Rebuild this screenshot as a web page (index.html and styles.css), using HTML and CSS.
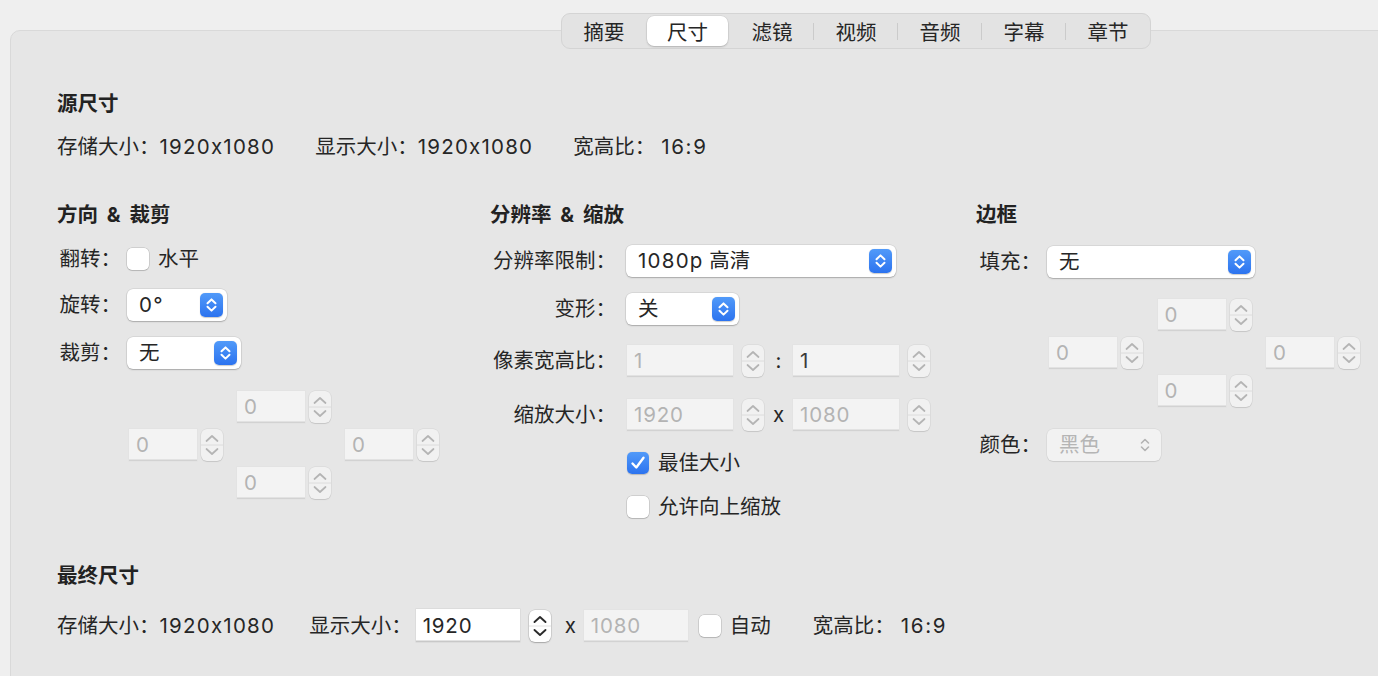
FILE: index.html
```html
<!DOCTYPE html>
<html lang="zh-CN">
<head>
<meta charset="utf-8">
<title>尺寸</title>
<link rel="stylesheet" href="styles.css">
</head>
<body>
<nav class="tabs">
  <div class="tab">摘要</div>
  <div class="tab active">尺寸</div>
  <div class="tab">滤镜</div>
  <div class="tab divided">视频</div>
  <div class="tab divided">音频</div>
  <div class="tab divided">字幕</div>
  <div class="tab divided">章节</div>
</nav>

<main class="panel">
  <h2 class="heading">源尺寸</h2>
  <div class="info-row">
    <span>存储大小：<span class="num">1920x1080</span></span>
    <span>显示大小：<span class="num">1920x1080</span></span>
    <span>宽高比：<span class="num ratio-num">16:9</span></span>
  </div>

  <div class="cols">
    <!-- Column 1 -->
    <section class="col">
      <h2 class="heading spaced">方向 &amp; 裁剪</h2>
      <div class="row r1-1">
        <span class="label lbl1">翻转：</span>
        <span class="check"></span>
        <span class="check-text">水平</span>
      </div>
      <div class="row r1-2">
        <span class="label lbl1">旋转：</span>
        <div class="popup w100"><span class="num">0°</span>
          <span class="arrows"><svg viewBox="0 0 23 24" width="23" height="24"><path d="M7.5 10.2 L11.5 6.4 L15.5 10.2 M7.5 13.8 L11.5 17.6 L15.5 13.8" fill="none" stroke="#fff" stroke-width="2" stroke-linecap="round" stroke-linejoin="round"/></svg></span>
        </div>
      </div>
      <div class="row r1-3">
        <span class="label lbl1">裁剪：</span>
        <div class="popup w114"><span>无</span>
          <span class="arrows"><svg viewBox="0 0 23 24" width="23" height="24"><path d="M7.5 10.2 L11.5 6.4 L15.5 10.2 M7.5 13.8 L11.5 17.6 L15.5 13.8" fill="none" stroke="#fff" stroke-width="2" stroke-linecap="round" stroke-linejoin="round"/></svg></span>
        </div>
      </div>
      <div class="quad quad1">
        <div class="spin q-top"><span class="field w68">0</span><span class="stepper"><svg viewBox="0 0 22 32" width="22" height="32"><line x1="0" y1="16" x2="22" y2="16" stroke="#dcdcdc" stroke-width="1"/><path d="M5.5 12 L11 7 L16.5 12 M5.5 20 L11 25 L16.5 20" fill="none" stroke="#b4b4b4" stroke-width="1.7" stroke-linecap="round" stroke-linejoin="round"/></svg></span></div>
        <div class="spin q-left"><span class="field w68">0</span><span class="stepper"><svg viewBox="0 0 22 32" width="22" height="32"><line x1="0" y1="16" x2="22" y2="16" stroke="#dcdcdc" stroke-width="1"/><path d="M5.5 12 L11 7 L16.5 12 M5.5 20 L11 25 L16.5 20" fill="none" stroke="#b4b4b4" stroke-width="1.7" stroke-linecap="round" stroke-linejoin="round"/></svg></span></div>
        <div class="spin q-right"><span class="field w68">0</span><span class="stepper"><svg viewBox="0 0 22 32" width="22" height="32"><line x1="0" y1="16" x2="22" y2="16" stroke="#dcdcdc" stroke-width="1"/><path d="M5.5 12 L11 7 L16.5 12 M5.5 20 L11 25 L16.5 20" fill="none" stroke="#b4b4b4" stroke-width="1.7" stroke-linecap="round" stroke-linejoin="round"/></svg></span></div>
        <div class="spin q-bottom"><span class="field w68">0</span><span class="stepper"><svg viewBox="0 0 22 32" width="22" height="32"><line x1="0" y1="16" x2="22" y2="16" stroke="#dcdcdc" stroke-width="1"/><path d="M5.5 12 L11 7 L16.5 12 M5.5 20 L11 25 L16.5 20" fill="none" stroke="#b4b4b4" stroke-width="1.7" stroke-linecap="round" stroke-linejoin="round"/></svg></span></div>
      </div>
    </section>

    <!-- Column 2 -->
    <section class="col">
      <h2 class="heading spaced">分辨率 &amp; 缩放</h2>
      <div class="row r2-1">
        <span class="label lbl2">分辨率限制：</span>
        <div class="popup w270"><span><span class="num">1080p</span> 高清</span>
          <span class="arrows"><svg viewBox="0 0 23 24" width="23" height="24"><path d="M7.5 10.2 L11.5 6.4 L15.5 10.2 M7.5 13.8 L11.5 17.6 L15.5 13.8" fill="none" stroke="#fff" stroke-width="2" stroke-linecap="round" stroke-linejoin="round"/></svg></span>
        </div>
      </div>
      <div class="row r2-2">
        <span class="label lbl2">变形：</span>
        <div class="popup w113"><span>关</span>
          <span class="arrows"><svg viewBox="0 0 23 24" width="23" height="24"><path d="M7.5 10.2 L11.5 6.4 L15.5 10.2 M7.5 13.8 L11.5 17.6 L15.5 13.8" fill="none" stroke="#fff" stroke-width="2" stroke-linecap="round" stroke-linejoin="round"/></svg></span>
        </div>
      </div>
      <div class="row r2-3">
        <span class="label lbl2">像素宽高比：</span>
        <span class="field w106 shift">1</span>
        <span class="stepper gap9"><svg viewBox="0 0 22 32" width="22" height="32"><line x1="0" y1="16" x2="22" y2="16" stroke="#dcdcdc" stroke-width="1"/><path d="M5.5 12 L11 7 L16.5 12 M5.5 20 L11 25 L16.5 20" fill="none" stroke="#b4b4b4" stroke-width="1.7" stroke-linecap="round" stroke-linejoin="round"/></svg></span>
        <span class="mid">:</span>
        <span class="field w106 darktext">1</span>
        <span class="stepper gap9"><svg viewBox="0 0 22 32" width="22" height="32"><line x1="0" y1="16" x2="22" y2="16" stroke="#dcdcdc" stroke-width="1"/><path d="M5.5 12 L11 7 L16.5 12 M5.5 20 L11 25 L16.5 20" fill="none" stroke="#b4b4b4" stroke-width="1.7" stroke-linecap="round" stroke-linejoin="round"/></svg></span>
      </div>
      <div class="row r2-4">
        <span class="label lbl2">缩放大小：</span>
        <span class="field w106 shift">1920</span>
        <span class="stepper gap9"><svg viewBox="0 0 22 32" width="22" height="32"><line x1="0" y1="16" x2="22" y2="16" stroke="#dcdcdc" stroke-width="1"/><path d="M5.5 12 L11 7 L16.5 12 M5.5 20 L11 25 L16.5 20" fill="none" stroke="#b4b4b4" stroke-width="1.7" stroke-linecap="round" stroke-linejoin="round"/></svg></span>
        <span class="mid">x</span>
        <span class="field w106">1080</span>
        <span class="stepper gap9"><svg viewBox="0 0 22 32" width="22" height="32"><line x1="0" y1="16" x2="22" y2="16" stroke="#dcdcdc" stroke-width="1"/><path d="M5.5 12 L11 7 L16.5 12 M5.5 20 L11 25 L16.5 20" fill="none" stroke="#b4b4b4" stroke-width="1.7" stroke-linecap="round" stroke-linejoin="round"/></svg></span>
      </div>
      <div class="row r2-5">
        <span class="label lbl2"></span>
        <span class="check on shift"><svg viewBox="0 0 22 22" width="22" height="22"><path d="M5.5 11.5 L9.3 15.5 L16.5 5.8" fill="none" stroke="#fff" stroke-width="2.4" stroke-linecap="round" stroke-linejoin="round"/></svg></span>
        <span class="check-text">最佳大小</span>
      </div>
      <div class="row r2-6">
        <span class="label lbl2"></span>
        <span class="check shift"></span>
        <span class="check-text">允许向上缩放</span>
      </div>
    </section>

    <!-- Column 3 -->
    <section class="col">
      <h2 class="heading">边框</h2>
      <div class="row r3-1">
        <span class="label lbl3">填充：</span>
        <div class="popup w208"><span>无</span>
          <span class="arrows"><svg viewBox="0 0 23 24" width="23" height="24"><path d="M7.5 10.2 L11.5 6.4 L15.5 10.2 M7.5 13.8 L11.5 17.6 L15.5 13.8" fill="none" stroke="#fff" stroke-width="2" stroke-linecap="round" stroke-linejoin="round"/></svg></span>
        </div>
      </div>
      <div class="quad quad3">
        <div class="spin q-top"><span class="field w68">0</span><span class="stepper"><svg viewBox="0 0 22 32" width="22" height="32"><line x1="0" y1="16" x2="22" y2="16" stroke="#dcdcdc" stroke-width="1"/><path d="M5.5 12 L11 7 L16.5 12 M5.5 20 L11 25 L16.5 20" fill="none" stroke="#b4b4b4" stroke-width="1.7" stroke-linecap="round" stroke-linejoin="round"/></svg></span></div>
        <div class="spin q-left"><span class="field w68">0</span><span class="stepper"><svg viewBox="0 0 22 32" width="22" height="32"><line x1="0" y1="16" x2="22" y2="16" stroke="#dcdcdc" stroke-width="1"/><path d="M5.5 12 L11 7 L16.5 12 M5.5 20 L11 25 L16.5 20" fill="none" stroke="#b4b4b4" stroke-width="1.7" stroke-linecap="round" stroke-linejoin="round"/></svg></span></div>
        <div class="spin q-right"><span class="field w68">0</span><span class="stepper"><svg viewBox="0 0 22 32" width="22" height="32"><line x1="0" y1="16" x2="22" y2="16" stroke="#dcdcdc" stroke-width="1"/><path d="M5.5 12 L11 7 L16.5 12 M5.5 20 L11 25 L16.5 20" fill="none" stroke="#b4b4b4" stroke-width="1.7" stroke-linecap="round" stroke-linejoin="round"/></svg></span></div>
        <div class="spin q-bottom"><span class="field w68">0</span><span class="stepper"><svg viewBox="0 0 22 32" width="22" height="32"><line x1="0" y1="16" x2="22" y2="16" stroke="#dcdcdc" stroke-width="1"/><path d="M5.5 12 L11 7 L16.5 12 M5.5 20 L11 25 L16.5 20" fill="none" stroke="#b4b4b4" stroke-width="1.7" stroke-linecap="round" stroke-linejoin="round"/></svg></span></div>
      </div>
      <div class="row r3-2">
        <span class="label lbl3">颜色：</span>
        <div class="popup w114 disabled"><span>黑色</span>
          <span class="arrows-plain"><svg viewBox="0 0 12 20" width="12" height="20"><path d="M2.5 8 L6 4.5 L9.5 8 M2.5 12 L6 15.5 L9.5 12" fill="none" stroke="#b4b4b4" stroke-width="1.6" stroke-linecap="round" stroke-linejoin="round"/></svg></span>
        </div>
      </div>
    </section>
  </div>

  <h2 class="heading final">最终尺寸</h2>
  <div class="final-row">
    <span>存储大小：<span class="num">1920x1080</span></span>
    <span class="disp-label">显示大小：</span>
    <span class="field w104 active-field">1920</span>
    <span class="stepper active-stepper"><svg viewBox="0 0 22 32" width="22" height="32"><line x1="0" y1="16" x2="22" y2="16" stroke="#e2e2e2" stroke-width="1"/><path d="M5.5 12 L11 7 L16.5 12 M5.5 20 L11 25 L16.5 20" fill="none" stroke="#2a2a2a" stroke-width="1.9" stroke-linecap="round" stroke-linejoin="round"/></svg></span>
    <span class="x-char">x</span>
    <span class="field w104">1080</span>
    <span class="check auto-check"></span>
    <span class="check-text">自动</span>
    <span class="ratio">宽高比：<span class="num ratio-num">16:9</span></span>
  </div>
</main>
</body>
</html>
```

FILE: styles.css
```css
* {
  box-sizing: border-box;
  margin: 0;
  padding: 0;
}

html, body {
  height: 100%;
}

body {
  background: #efefef;
  font-family: "Inter", "Noto Sans CJK SC", sans-serif;
  font-size: 20.5px;
  line-height: 28px;
  color: #262626;
  overflow: hidden;
}

.num {
  letter-spacing: 0.06em;
}

.ratio-num {
  margin-left: 6px;
  letter-spacing: 0.08em;
}

/* ---------- segmented tabs ---------- */
.tabs {
  position: relative;
  z-index: 1;
  display: flex;
  width: 590px;
  height: 36px;
  margin: 13px 0 0 561px;
  padding: 2px 0;
  background: #e3e3e3;
  border: 1px solid #d4d4d4;
  border-radius: 9px;
}

.tab {
  position: relative;
  width: 84px;
  height: 30px;
  display: flex;
  align-items: center;
  justify-content: center;
  padding-top: 3px;
  font-size: 20.5px;
  color: #262626;
}

.tab.active {
  width: 81px;
  margin: 0 2px 0 1px;
  background: #ffffff;
  border-radius: 7px;
  box-shadow: 0 0 0 0.5px rgba(0, 0, 0, 0.08), 0 1px 2px rgba(0, 0, 0, 0.18);
}

.tab.divided::before {
  content: "";
  position: absolute;
  left: -1px;
  top: 7px;
  width: 1px;
  height: 17px;
  background: #cbcbcb;
}

/* ---------- panel ---------- */
.panel {
  width: 1420px;
  height: 700px;
  margin: -19px 0 0 10px;
  padding: 59px 0 0 46px;
  background: #e6e6e6;
  border: 1px solid #d9d9d9;
  border-radius: 10px;
}

.heading {
  font-size: 20.5px;
  font-weight: 700;
  line-height: 28px;
  color: #222;
}

.heading.spaced {
  word-spacing: 4px;
}

.info-row {
  display: flex;
  gap: 40px;
  margin-top: 15px;
}

.cols {
  display: grid;
  grid-template-columns: 433px 486px auto;
  margin-top: 40px;
  height: 322px;
}

.row {
  display: flex;
  align-items: center;
  height: 32px;
}

.r1-1 { margin-top: 14px; }
.r1-2 { margin-top: 14px; }
.r1-3 { margin-top: 16px; }

.r2-1 { margin-top: 16px; }
.r2-2 { margin-top: 16px; }
.r2-3 { margin-top: 20px; }
.r2-4 { margin-top: 22px; }
.r2-5 { margin-top: 16px; }
.r2-6 { margin-top: 12px; }

.r3-1 { margin-top: 17px; }
.r3-2 { margin-top: 22px; }

.label {
  flex: none;
  text-align: right;
  white-space: nowrap;
}

.lbl1 { width: 64px; margin-right: 6px; }
.lbl2 { width: 126px; margin-right: 10px; }
.lbl3 { width: 65px; margin-right: 6px; }

.shift { margin-left: 1px; }

/* ---------- popup buttons ---------- */
.popup {
  flex: none;
  display: flex;
  align-items: center;
  justify-content: space-between;
  height: 32px;
  padding: 0 4px 0 12px;
  background: #ffffff;
  border-radius: 6px;
  box-shadow: 0 0 0 0.5px rgba(0, 0, 0, 0.12), 0 1px 1.5px rgba(0, 0, 0, 0.22);
}

.popup .arrows {
  display: flex;
  width: 23px;
  height: 24px;
  border-radius: 5px;
  background: linear-gradient(#519af9, #2c73ef);
  box-shadow: 0 0.5px 1px rgba(0, 0, 0, 0.2);
}

.popup.disabled {
  background: #f2f2f2;
  color: #b5b5b5;
  padding-right: 10px;
  box-shadow: 0 0 0 0.5px rgba(0, 0, 0, 0.07), 0 1px 1px rgba(0, 0, 0, 0.08);
}

.arrows-plain {
  display: flex;
}

.w100 { width: 100px; }
.w113 { width: 113px; }
.w114 { width: 114px; }
.w208 { width: 208px; }
.w270 { width: 270px; }
.w68 { width: 68px; }
.w104 { width: 104px; }
.w106 { width: 106px; }

/* ---------- text fields & steppers ---------- */
.field {
  flex: none;
  display: flex;
  align-items: center;
  height: 32px;
  padding-left: 7px;
  background: #f3f3f3;
  color: #b3b3b3;
  letter-spacing: 0.04em;
  box-shadow: inset 0 -1.5px 0 #d2d2d2, 0 0 0 0.5px #e0e0e0;
}

.field.darktext {
  color: #3a3a3a;
}

.field.active-field {
  background: #ffffff;
  color: #262626;
  height: 33px;
  box-shadow: inset 0 -1.5px 0 #c8c8c8, 0 0 0 0.5px #d2d2d2;
}

.stepper {
  flex: none;
  display: flex;
  width: 22px;
  height: 32px;
  border-radius: 6px;
  background: #f1f1f1;
  box-shadow: 0 0 0 0.5px rgba(0, 0, 0, 0.08), 0 1px 1px rgba(0, 0, 0, 0.1);
}

.stepper.active-stepper {
  background: #ffffff;
  margin-left: 9px;
  box-shadow: 0 0 0 0.5px rgba(0, 0, 0, 0.15), 0 1px 1.5px rgba(0, 0, 0, 0.22);
}

.gap9 { margin-left: 9px; }

.mid {
  width: 29px;
  text-align: center;
  flex: none;
}

.spin {
  display: flex;
  gap: 4px;
}

.quad {
  display: grid;
  grid-template-columns: repeat(3, 94px);
  grid-template-rows: repeat(3, 32px);
  column-gap: 14px;
  row-gap: 6px;
}

.quad1 { margin: 22px 0 0 72px; }
.quad3 { margin: 21px 0 0 73px; column-gap: 14.5px; }

.q-top { grid-column: 2; grid-row: 1; }
.q-left { grid-column: 1; grid-row: 2; }
.q-right { grid-column: 3; grid-row: 2; }
.q-bottom { grid-column: 2; grid-row: 3; }

/* ---------- checkboxes ---------- */
.check {
  flex: none;
  display: flex;
  width: 22px;
  height: 22px;
  border-radius: 5px;
  background: #ffffff;
  box-shadow: 0 0 0 0.5px rgba(0, 0, 0, 0.2), 0 1px 1px rgba(0, 0, 0, 0.12);
}

.check.on {
  background: linear-gradient(#519af9, #2c73ef);
  box-shadow: 0 0.5px 1px rgba(0, 0, 0, 0.2);
}

.check-text {
  margin-left: 9px;
  white-space: nowrap;
}

/* ---------- final size ---------- */
.heading.final {
  margin-top: 39px;
}

.final-row {
  display: flex;
  align-items: center;
  height: 33px;
  margin-top: 19px;
  white-space: nowrap;
}

.disp-label { margin-left: 34px; margin-right: 4px; }

.x-char {
  margin: 0 8px 0 14px;
}

.auto-check { margin-left: 11px; }

.ratio { margin-left: 42px; }
```
